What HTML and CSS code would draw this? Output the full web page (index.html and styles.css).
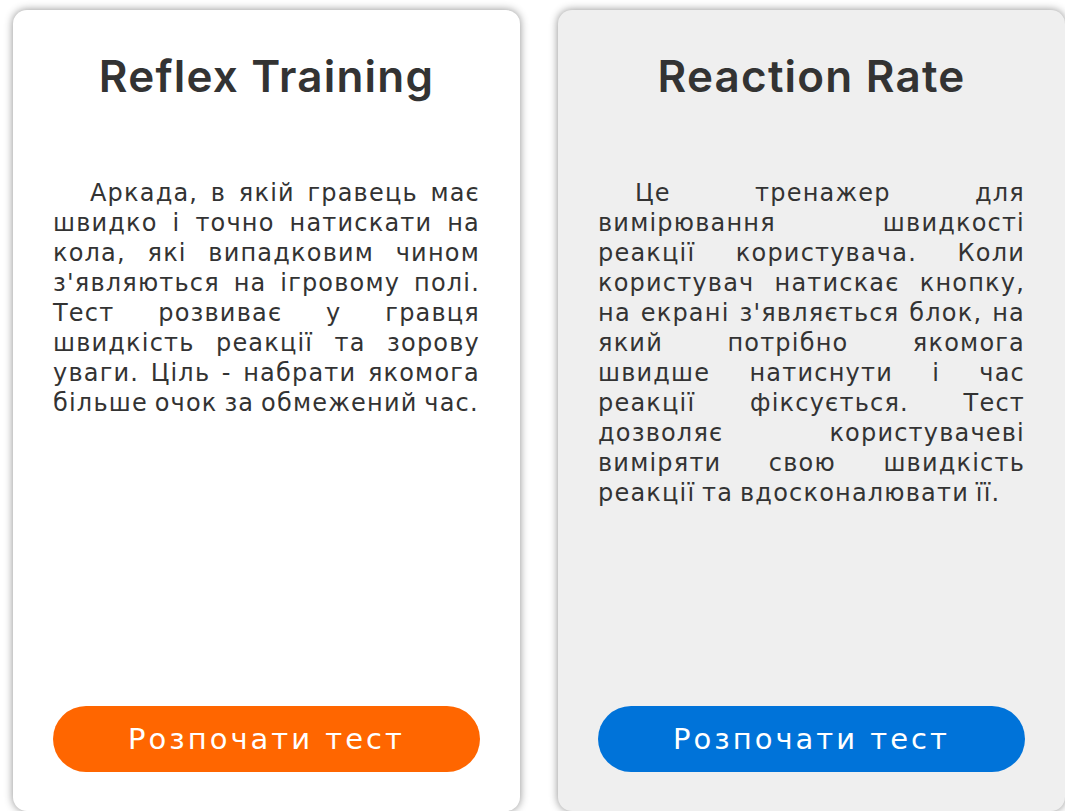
FILE: index.html
```html
<!DOCTYPE html>
<html lang="uk">
<head>
<meta charset="utf-8">
<title>Тести реакції</title>
<link rel="stylesheet" href="styles.css">
</head>
<body>
<main class="tests">
  <section class="test-card">
    <h2 class="test-title">Reflex Training</h2>
    <p class="test-text">Аркада, в якій гравець має швидко і точно натискати на кола, які випадковим чином з'являються на ігровому полі. Тест розвиває у гравця швидкість реакції та зорову уваги. Ціль - набрати якомога більше очок за обмежений час.</p>
    <button class="test-btn test-btn--orange" type="button">Розпочати тест</button>
  </section>
  <section class="test-card test-card--grey">
    <h2 class="test-title">Reaction Rate</h2>
    <p class="test-text">Це тренажер для вимірювання швидкості реакції користувача. Коли користувач натискає кнопку, на екрані з'являється блок, на який потрібно якомога швидше натиснути і час реакції фіксується. Тест дозволяє користувачеві виміряти свою швидкість реакції та вдосконалювати її.</p>
    <button class="test-btn test-btn--blue" type="button">Розпочати тест</button>
  </section>
</main>
</body>
</html>
```

FILE: styles.css
```css
html, body {
  margin: 0;
  padding: 0;
  background: #ffffff;
  overflow: hidden;
}

body {
  font-family: "DejaVu Sans", "Noto Sans", sans-serif;
  color: #333333;
}

.tests {
  display: flex;
  gap: 38px;
  padding: 10px 0 0 13px;
}

.test-card {
  flex: 0 0 507px;
  box-sizing: border-box;
  height: 801px;
  padding: 40px 40px 39px;
  background: #ffffff;
  border-radius: 14px;
  box-shadow: 0 0 9px rgba(0, 0, 0, 0.45);
  display: flex;
  flex-direction: column;
}

.test-card--grey {
  background: #efefef;
}

.test-title {
  margin: 0;
  font-family: Inter, "Noto Sans", sans-serif;
  font-size: 44px;
  line-height: 52px;
  font-weight: 600;
  letter-spacing: 1.2px;
  text-align: center;
  color: #333333;
}

.test-text {
  margin: 76px 0 0;
  font-size: 24px;
  line-height: 30px;
  letter-spacing: 1.2px;
  word-spacing: -2px;
  text-align: justify;
  text-indent: 37px;
  color: #333333;
}

.test-btn {
  margin-top: auto;
  height: 66px;
  width: 100%;
  border: none;
  border-radius: 33px;
  font-family: "DejaVu Sans", "Noto Sans", sans-serif;
  font-size: 29px;
  letter-spacing: 3px;
  color: #ffffff;
  cursor: pointer;
}

.test-btn--orange {
  background: #ff6600;
}

.test-btn--blue {
  background: #0073d9;
}
```
